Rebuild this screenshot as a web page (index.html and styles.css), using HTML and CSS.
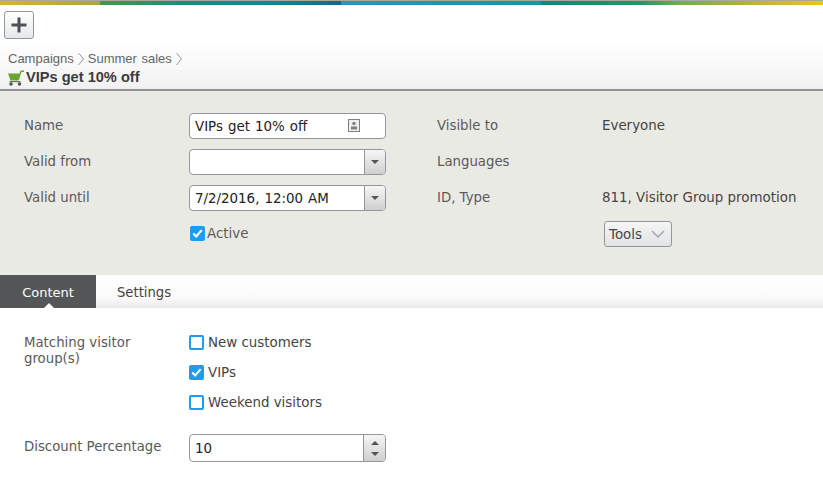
FILE: index.html
```html
<!DOCTYPE html>
<html lang="en">
<head>
<meta charset="utf-8">
<title>VIPs get 10% off</title>
<link rel="stylesheet" href="styles.css">
</head>
<body>
<div class="topbar"></div>
<header class="head">
  <button class="add" type="button" aria-label="Add">
    <svg width="16" height="16" viewBox="0 0 16 16"><path d="M8 .5v15M.5 8h15" stroke="#4c5058" stroke-width="3" fill="none"/></svg>
  </button>
  <nav class="crumbs">
    <span>Campaigns</span>
    <svg class="chev" width="6" height="14" viewBox="0 0 6 14"><path d="M.5 1l5 6-5 6" stroke="#999" fill="none"/></svg>
    <span>Summer sales</span>
    <svg class="chev" width="6" height="14" viewBox="0 0 6 14"><path d="M.5 1l5 6-5 6" stroke="#999" fill="none"/></svg>
  </nav>
  <h1 class="title">
    <svg width="16" height="16" viewBox="0 0 16 16"><path d="M0 3.500h11.500l1-3h3.500v1.500h-2.500l-2.500 7.500-1 1H2.500z" fill="#6aa52e"/><rect x="1.500" y="11" width="11" height="1.200" fill="#6b7a55"/><circle cx="3" cy="14" r="1.800" fill="#555"/><circle cx="11.500" cy="14" r="1.800" fill="#555"/></svg>
    VIPs get 10% off
  </h1>
</header>
<section class="panel">
  <div class="col-left">
    <label class="lbl">Name</label>
    <div class="field">
      <span class="val">VIPs get 10% off</span>
      <svg class="card" width="12" height="13" viewBox="0 0 12 13"><rect x=".5" y=".5" width="11" height="12" fill="#eee" stroke="#808080"/><circle cx="6" cy="4.500" r="1.700" fill="#808080"/><rect x="3" y="7.500" width="6" height="3" fill="#808080"/></svg>
    </div>
    <label class="lbl">Valid from</label>
    <div class="field">
      <span class="val"></span>
      <span class="drop"><i class="arrow-down"></i></span>
    </div>
    <label class="lbl">Valid until</label>
    <div class="field">
      <span class="val">7/2/2016, 12:00 AM</span>
      <span class="drop"><i class="arrow-down"></i></span>
    </div>
    <span></span>
    <div class="active">
      <span class="check on"><svg width="13" height="11" viewBox="0 0 13 11"><path d="M1.500 5.500l3.500 3.500 6.500-7.500" stroke="#fff" stroke-width="2.600" fill="none"/></svg></span>
      <span class="active-text">Active</span>
    </div>
  </div>
  <div class="col-right">
    <span class="lbl">Visible to</span><span class="info">Everyone</span>
    <span class="lbl">Languages</span><span class="info"></span>
    <span class="lbl">ID, Type</span><span class="info">811, Visitor Group promotion</span>
    <span></span>
    <div class="tools-cell">
      <button class="tools" type="button">Tools
        <svg width="14" height="8" viewBox="0 0 14 8"><path d="M1 1l6 6 6-6" stroke="#a4a7aa" stroke-width="1.500" fill="none"/></svg>
      </button>
    </div>
  </div>
</section>
<div class="tabs">
  <div class="tab current">Content</div>
  <div class="tab">Settings</div>
</div>
<main class="content">
  <label class="lbl groups-label">Matching visitor group(s)</label>
  <div class="groups">
    <div class="opt"><span class="check"></span><span>New customers</span></div>
    <div class="opt"><span class="check on"><svg width="13" height="11" viewBox="0 0 13 11"><path d="M1.500 5.500l3.500 3.500 6.500-7.500" stroke="#fff" stroke-width="2.600" fill="none"/></svg></span><span>VIPs</span></div>
    <div class="opt"><span class="check"></span><span>Weekend visitors</span></div>
  </div>
  <label class="lbl disc-label">Discount Percentage</label>
  <div class="field spin-field">
    <span class="val">10</span>
    <span class="spin"><i class="arrow-up"></i><i class="arrow-down"></i></span>
  </div>
</main>
</body>
</html>
```

FILE: styles.css
```css
* { box-sizing: border-box; }
html, body { margin: 0; padding: 0; background: #fff; }
body {
  width: 823px;
  height: 494px;
  overflow: hidden;
  font-family: "DejaVu Sans", Verdana, sans-serif;
  font-size: 13.400px;
  color: #5a5a5a;
}
.topbar {
  height: 5px;
  background: linear-gradient(90deg, #d6b81e 0, #a8a83a 100px, #3f9a48 100px, #14907a 190px, #0a8a96 270px, #12698f 341px, #2a95c0 341px, #0a9aa8 541px, #0a8a78 541px, #1f9a60 640px, #6fb04a 680px, #b9b32e 750px, #efc41c 823px);
  border-top: 1px solid #a9a9a0;
}
.head {
  height: 86px;
  padding: 6px 0 0 4px;
  background: linear-gradient(180deg, #fff 0, #fff 45%, #f1f1f1 100%);
  border-bottom: 2px solid #929292;
}
.add {
  display: flex;
  align-items: center;
  justify-content: center;
  width: 30px;
  height: 28px;
  padding: 0;
  border: 1px solid #8f979f;
  border-radius: 3px;
  background: linear-gradient(180deg, #fff, #e6e7e8);
}
.crumbs {
  display: flex;
  align-items: center;
  gap: 4px;
  margin: 12px 0 0 4px;
  height: 16px;
  font: 13px/16px "Liberation Sans", Arial, sans-serif;
  word-spacing: 1px;
  color: #666;
}
.title {
  display: flex;
  align-items: center;
  gap: 2px;
  margin: 2px 0 0 4px;
  height: 17px;
  font: bold 14.600px/17px "Liberation Sans", Arial, sans-serif;
  color: #3c3c3c;
}
.panel {
  display: flex;
  height: 184px;
  padding: 22px 0 0 24px;
  background: #eaeae5;
}
.col-left, .col-right {
  flex: none;
  display: grid;
  grid-auto-rows: 26px;
  row-gap: 10px;
  align-items: center;
}
.col-left { grid-template-columns: 165px 197px; width: 413px; }
.col-right { grid-template-columns: 165px 230px; }
.panel .lbl, .panel .info, .active { padding-bottom: 2px; }
.lbl { color: #5a5a5a; font-size: 13.300px; }
.info { color: #444; white-space: nowrap; }
.field {
  display: flex;
  align-items: stretch;
  height: 26px;
  background: #fff;
  border: 1px solid #8f979f;
  border-radius: 4px;
  color: #222;
  position: relative;
}
.val { flex: 1; padding-left: 5px; line-height: 26px; word-spacing: .8px; white-space: nowrap; }
.card { position: absolute; right: 25px; top: 5px; }
.drop, .spin {
  width: 21px;
  display: flex;
  flex-direction: column;
  align-items: center;
  justify-content: center;
  border-left: 1px solid #8f979f;
  border-radius: 0 3px 3px 0;
  background: linear-gradient(180deg, #f6f6f6, #cfcfcf);
}
.spin { width: 22px; gap: 7px; }
.arrow-down, .arrow-up {
  display: block;
  width: 0;
  height: 0;
  border-left: 4px solid transparent;
  border-right: 4px solid transparent;
}
.arrow-down { border-top: 4px solid #555; }
.arrow-up { border-bottom: 4px solid #555; }
.check {
  display: inline-flex;
  align-items: center;
  justify-content: center;
  flex: none;
  width: 15px;
  height: 15px;
  background: #fff;
  border: 2px solid #1e9cf0;
  border-radius: 2px;
}
.check.on { background: #1e9cf0; }
.active { display: flex; align-items: center; gap: 2px; padding-left: 1px; }
.active-text { color: #5a5a5a; }
.tools-cell { display: flex; }
.tools {
  display: flex;
  align-items: center;
  gap: 9px;
  width: 68px;
  height: 26px;
  padding: 0 0 0 4px;
  margin-left: 2px;
  border: 1px solid #8f979f;
  border-radius: 3px;
  background: linear-gradient(180deg, #f5f5f5, #e2e3e5);
  font: 13.400px "DejaVu Sans", Verdana, sans-serif;
  color: #444;
}
.tabs {
  display: flex;
  height: 33px;
  background: linear-gradient(180deg, #fff 0, #fafafa 70%, #e9e9e9 100%);
}
.tab {
  width: 96px;
  line-height: 36px;
  text-align: center;
  font-size: 13.200px;
  color: #444;
}
.tab + .tab { width: 94px; line-height: 36px; text-align: left; padding-left: 21px; }
.tab.current {
  position: relative;
  color: #fff;
  font-size: 13px;
  background: #555658;
}
.tab.current::after {
  content: "";
  position: absolute;
  left: 44px;
  bottom: 0;
  border-left: 5px solid transparent;
  border-right: 5px solid transparent;
  border-bottom: 5px solid #fff;
}
.content {
  display: grid;
  grid-template-columns: 165px 197px;
  padding: 24px 0 0 24px;
  align-items: start;
}
.groups-label { line-height: 16px; width: 130px; margin-top: 3px; }
.groups { display: flex; flex-direction: column; gap: 10px; padding-bottom: 22px; }
.opt { display: flex; align-items: center; gap: 4px; height: 20px; color: #444; }
.disc-label { align-self: center; padding-bottom: 4px; }
.spin-field { height: 28px; }
.spin-field .val { line-height: 27px; }
```
